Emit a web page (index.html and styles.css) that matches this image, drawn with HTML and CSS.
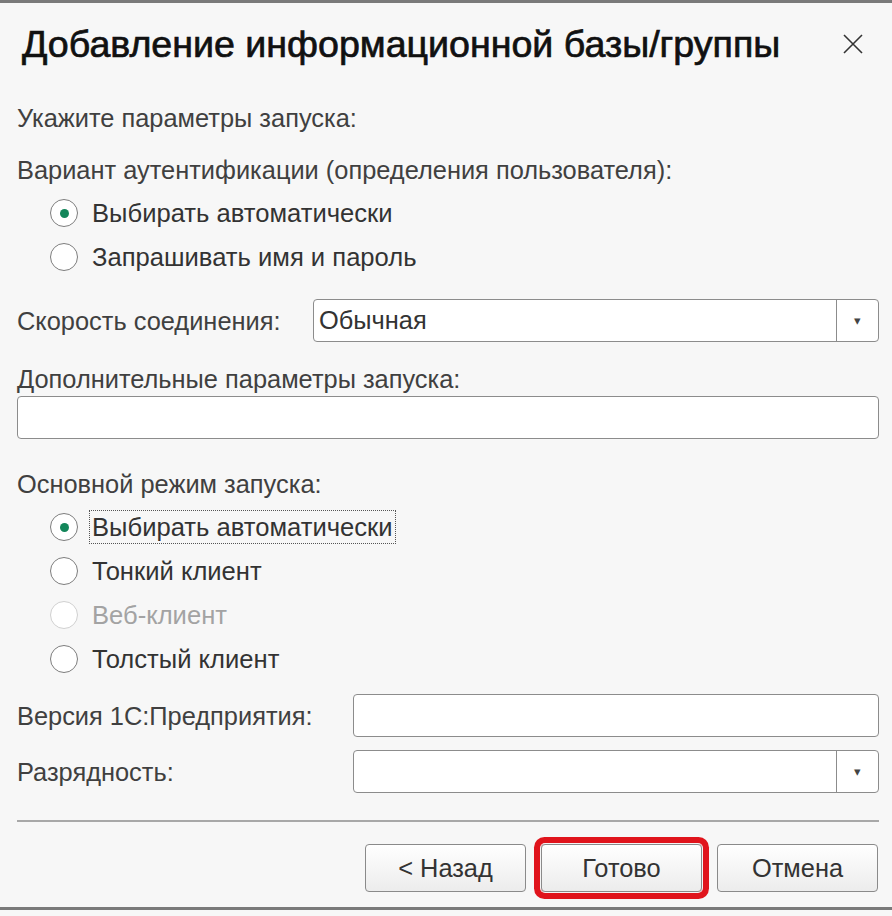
FILE: index.html
```html
<!DOCTYPE html>
<html lang="ru">
<head>
    <meta charset="UTF-8">
    <meta name="viewport" content="width=device-width, initial-scale=1.0">
    <title>Добавление информационной базы/группы</title>
    <link rel="stylesheet" href="styles.css">
</head>
<body>
    <div class="dialog">
        <div class="header">
            <h1>Добавление информационной базы/группы</h1>
            <svg class="close" width="20" height="20" viewBox="0 0 20 20">
                <path d="M1 1 L19 19 M19 1 L1 19" stroke="#333" stroke-width="1.6" fill="none"/>
            </svg>
        </div>

        <div class="label intro">Укажите параметры запуска:</div>

        <div class="label auth">Вариант аутентификации (определения пользователя):</div>
        <div class="radio-group">
            <div class="radio checked"><span class="circle"></span><span class="text">Выбирать автоматически</span></div>
            <div class="radio"><span class="circle"></span><span class="text">Запрашивать имя и пароль</span></div>
        </div>

        <div class="field-row speed">
            <div class="label">Скорость соединения:</div>
            <div class="select">
                <span class="value">Обычная</span>
                <span class="drop">&#9662;</span>
            </div>
        </div>

        <div class="label extra">Дополнительные параметры запуска:</div>
        <div class="input wide"></div>

        <div class="label mode">Основной режим запуска:</div>
        <div class="radio-group">
            <div class="radio checked"><span class="circle"></span><span class="text focus">Выбирать автоматически</span></div>
            <div class="radio"><span class="circle"></span><span class="text">Тонкий клиент</span></div>
            <div class="radio disabled"><span class="circle"></span><span class="text">Веб-клиент</span></div>
            <div class="radio"><span class="circle"></span><span class="text">Толстый клиент</span></div>
        </div>

        <div class="field-row version">
            <div class="label">Версия 1С:Предприятия:</div>
            <div class="input"></div>
        </div>

        <div class="field-row bits">
            <div class="label">Разрядность:</div>
            <div class="select">
                <span class="value"></span>
                <span class="drop">&#9662;</span>
            </div>
        </div>

        <div class="separator"></div>

        <div class="buttons">
            <button>&lt; Назад</button>
            <button class="marked">Готово</button>
            <button>Отмена</button>
        </div>
    </div>
</body>
</html>
```

FILE: styles.css
```css
body {
    margin: 0;
    padding: 0;
    background-color: #f7f7f7;
    font-family: "Liberation Sans", Arial, sans-serif;
    color: #3a3a3a;
}
.dialog {
    border-top: 3px solid #7a7a7a;
    border-bottom: 3px solid #7a7a7a;
    height: 910px;
    box-sizing: border-box;
    padding: 0 13px 0 17px;
}
.header {
    height: 82px;
    display: flex;
    align-items: center;
    justify-content: space-between;
}
h1 {
    margin: 0 0 0 5px;
    font-size: 37.6px;
    font-weight: normal;
    color: #111;
    -webkit-text-stroke: 0.7px #111;
}
.close {
    margin-right: 16px;
}
.label {
    font-size: 25.4px;
    line-height: 30px;
    color: #404040;
}
.intro {
    margin-top: 18px;
}
.auth {
    margin-top: 22px;
}
.extra {
    margin-top: 22px;
}
.mode {
    margin-top: 30px;
}
.radio-group {
    margin-top: 6px;
    padding-left: 33px;
}
.radio {
    height: 44px;
    display: flex;
    align-items: center;
}
.circle {
    width: 28px;
    height: 28px;
    border: 1px solid #7d7d7d;
    border-radius: 50%;
    background: #fff;
    box-sizing: border-box;
    display: flex;
    align-items: center;
    justify-content: center;
    flex-shrink: 0;
}
.radio.checked .circle::after {
    content: "";
    width: 9px;
    height: 9px;
    border-radius: 50%;
    background: #13865a;
}
.radio .text {
    font-size: 25.6px;
    color: #333;
    margin-left: 14px;
    line-height: 32px;
}
.radio .text.focus {
    margin-left: 11px;
    padding: 0 2px;
    border: 1px dotted #555;
}
.radio.disabled .circle {
    border-color: #d0d0d0;
}
.radio.disabled .text {
    color: #a3a3a3;
}
.field-row {
    display: flex;
    align-items: center;
}
.field-row .label {
    flex-shrink: 0;
}
.speed {
    margin-top: 20px;
}
.speed .label {
    width: 296px;
}
.version {
    margin-top: 13px;
}
.bits {
    margin-top: 13px;
}
.version .label,
.bits .label {
    width: 336px;
}
.select,
.input {
    flex: 1;
    height: 43px;
    box-sizing: border-box;
    border: 1px solid #8c8c8c;
    border-radius: 4px;
    background: #fff;
}
.select {
    display: flex;
    align-items: stretch;
}
.select .value {
    flex: 1;
    font-size: 25.4px;
    color: #333;
    padding-left: 5px;
    line-height: 41px;
}
.select .drop {
    width: 41px;
    border-left: 1px solid #8c8c8c;
    display: flex;
    align-items: center;
    justify-content: center;
    font-size: 13px;
    color: #444;
}
.input.wide {
    margin-top: 2px;
}
.separator {
    margin-top: 27px;
    height: 2px;
    background: #a8a8a8;
}
.buttons {
    margin-top: 22px;
    display: flex;
    justify-content: flex-end;
    gap: 15px;
    padding-right: 1px;
}
button {
    width: 161px;
    height: 48px;
    font-family: "Liberation Sans", Arial, sans-serif;
    font-size: 25.4px;
    color: #333;
    background: linear-gradient(#ffffff, #ececec);
    border: 1px solid #8a8a8a;
    border-radius: 4px;
}
button.marked {
    box-shadow: 0 0 0 1px #f4f4f4, 0 0 0 7px #e0141c;
}
```
